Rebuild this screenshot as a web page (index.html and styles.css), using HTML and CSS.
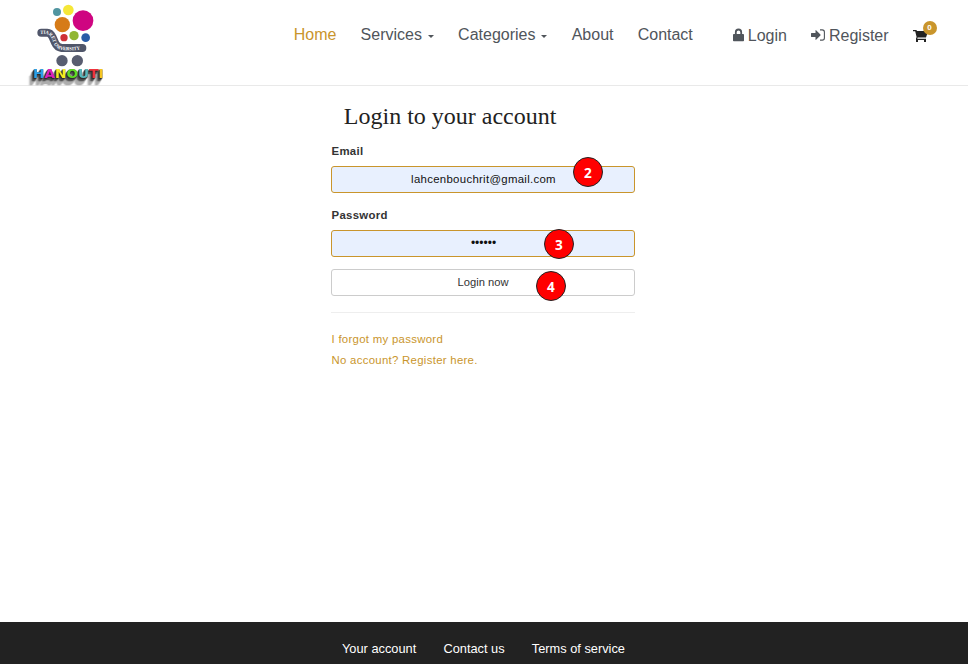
FILE: index.html
```html
<!DOCTYPE html>
<html lang="en">
<head>
<meta charset="utf-8">
<title>Hanouti - Login</title>
<link rel="stylesheet" href="styles.css">
</head>
<body>
<header class="header">
  <a class="logo" href="#">
    <svg width="95" height="86" viewBox="0 0 285 258">
      <defs>
        <path id="cart-curve" d="M61 101 L78 102 Q90 103 96 117 L102 131 Q108 147 125 150 Q155 153 197 147"/>
      </defs>
      <circle cx="111" cy="36" r="12" fill="#5195a0"/>
      <circle cx="145" cy="30" r="16" fill="#f5e738"/>
      <circle cx="127" cy="74" r="23" fill="#d67b18"/>
      <circle cx="189" cy="62" r="31" fill="#cf0581"/>
      <circle cx="132" cy="113" r="11" fill="#cf3036"/>
      <circle cx="162" cy="107" r="14" fill="#91b632"/>
      <circle cx="197" cy="113" r="13" fill="#285ba7"/>
      <path d="M64 98 H82 Q91 98 97 110 L106 130 Q111 142 125 144 H187" fill="none" stroke="#50566a" stroke-width="24" stroke-linecap="round" stroke-linejoin="round"/>
      <text class="logo-ribbon"><textPath href="#cart-curve" textLength="144" lengthAdjust="spacingAndGlyphs">TIARET UNIVERSITY</textPath></text>
      <circle cx="126" cy="182" r="17" fill="#585d70"/>
      <circle cx="172" cy="182" r="17" fill="#585d70"/>
      <text class="logo-word" x="39" y="234" textLength="212" lengthAdjust="spacingAndGlyphs"><tspan fill="#2aa0e8">H</tspan><tspan fill="#dc21bd">A</tspan><tspan fill="#f3ee20">N</tspan><tspan fill="#5fdc24">O</tspan><tspan fill="#58b8bd">U</tspan><tspan fill="#ef333d">T</tspan><tspan fill="#f5c522">I</tspan></text>
    </svg>
  </a>
  <nav class="nav">
    <a class="active" href="#">Home</a>
    <a href="#">Services<i class="caret"></i></a>
    <a href="#">Categories<i class="caret"></i></a>
    <a href="#">About</a>
    <a href="#">Contact</a>
  </nav>
  <div class="user-nav">
    <a href="#"><svg class="lock" width="11" height="14" viewBox="0 0 11 14"><path d="M2.8 6V4.2a2.7 2.7 0 0 1 5.4 0V6" fill="none" stroke="currentColor" stroke-width="1.8"/><rect y="6" width="11" height="7.2" rx=".8" fill="currentColor"/></svg>Login</a>
    <a href="#"><svg class="enter" width="14" height="12" viewBox="0 0 14 12"><path d="M0 4.4Q0 4 .4 4H4.5V1.5Q4.5.8 5.1 1.2L9.4 5.4Q9.9 6 9.4 6.6L5.1 10.8Q4.5 11.2 4.5 10.5V8H.4Q0 8 0 7.6Z" fill="currentColor"/><path d="M9 .9H11.2Q13.4.9 13.4 3.1V8.9Q13.4 11.1 11.2 11.1H9" fill="none" stroke="currentColor" stroke-width="1.1"/></svg>Register</a>
    <a class="cart" href="#"><svg width="16" height="14" viewBox="0 0 16 14"><path d="M0 1H3.4L4 2H15.2L13 8.5H4.6L4.3 9.8H13V13H11V11H5V13H3V9.5L3.6 8L2.2 2.2H0Z" fill="#222"/></svg><span class="badge">0</span></a>
  </div>
</header>
<main class="login">
  <h1>Login to your account</h1>
  <form>
    <label for="email">Email</label>
    <div class="field"><input id="email" type="text" value="lahcenbouchrit@gmail.com"><span class="marker marker-email">2</span></div>
    <label for="password">Password</label>
    <div class="field field-password"><input id="password" type="password" value="secret"><span class="marker marker-password">3</span></div>
    <div class="field"><button type="button">Login now</button><span class="marker marker-submit">4</span></div>
  </form>
  <div class="links">
    <a href="#">I forgot my password</a>
    <a href="#">No account? Register here.</a>
  </div>
</main>
<footer class="footer">
  <a href="#">Your account</a>
  <a href="#">Contact us</a>
  <a href="#">Terms of service</a>
</footer>
</body>
</html>
```
FILE: styles.css
```css
* { box-sizing: border-box; }

body {
  display: flex;
  flex-direction: column;
  height: 664px;
  margin: 0;
  overflow: hidden;
  background: #fff;
  color: #333;
  font-family: "Liberation Sans", Arial, sans-serif;
  font-size: 11.4px;
}

a { color: inherit; text-decoration: none; }

.header {
  display: flex;
  flex: none;
  height: 86px;
  padding-left: 20px;
  border-bottom: 1px solid #e9e9e9;
  color: #50555b;
  font-size: 16px;
  line-height: 20px;
}

.logo { width: 95px; height: 86px; }
.logo svg { display: block; }

.logo-ribbon {
  fill: #fff;
  font: bold 15px "Liberation Serif", serif;
}

.logo-word {
  font: bold 37px "DejaVu Sans", sans-serif;
  filter: drop-shadow(-1px 1.5px 0 #222) drop-shadow(-2px 3px 0 #333) drop-shadow(-4px 6px 0 #555) drop-shadow(-7px 12px 0 #7779);
}

.nav {
  display: flex;
  gap: 24.2px;
  margin-left: 178.7px;
  padding-top: 25px;
}

.nav a,
.user-nav a { display: flex; height: 20px; white-space: nowrap; }

.active { color: #c9952c; }

.caret {
  margin: 10px 0 0 6px;
  width: 6px;
  height: 3px;
  border: solid transparent;
  border-width: 3px 3px 0;
  border-top-color: #50555b;
}

.user-nav {
  display: flex;
  gap: 24px;
  margin-left: 40px;
  padding-top: 26px;
}

.lock { margin: 2px 4px 0 0; }
.enter { margin: 3px 4px 0 0; }

.cart { position: relative; }
.cart svg { margin-top: 3px; }

.badge {
  position: absolute;
  top: -5px;
  left: 10px;
  width: 14px;
  height: 14px;
  border-radius: 50%;
  background: #c9952c;
  color: #fff;
  font-size: 8px;
  font-weight: bold;
  line-height: 14px;
  text-align: center;
}

.login {
  flex: 1;
  width: 304px;
  margin-left: 331px;
}

h1 {
  margin: 16px 0 14px 12.8px;
  color: #222;
  font: 24px/28px "Liberation Serif", "Times New Roman", serif;
}

label {
  display: block;
  height: 22px;
  padding-left: .5px;
  font-weight: bold;
  letter-spacing: .3px;
  line-height: 14px;
}

.field {
  position: relative;
  height: 27px;
  margin-bottom: 15px;
}

.field + label { margin-top: 15px; }
.field:has(#email) { margin-bottom: 0; }
.field-password { margin-bottom: 12px; }

input,
button {
  display: block;
  width: 100%;
  height: 27px;
  margin: 0;
  border: 1px solid #c9952c;
  border-radius: 3px;
  background: #e8f0fe;
  color: #111;
  font: 11.4px "Liberation Sans", Arial, sans-serif;
  letter-spacing: .3px;
  text-align: center;
}

input { padding: 0 1px 2px 2px; }

#password {
  padding-bottom: 1px;
  font-size: 12px;
  letter-spacing: 0;
}

button {
  padding-bottom: 2px;
  border-color: #ccc;
  background: #fff;
  color: #333;
  font-size: 11.2px;
  letter-spacing: 0;
}

.marker {
  position: absolute;
  width: 30px;
  height: 30px;
  border: 1px solid #222;
  border-radius: 50%;
  background: #f00;
  color: #fff;
  font: bold 13.6px/30px "Noto Sans", sans-serif;
  text-align: center;
}

.marker-email { top: -9px; left: 242px; }
.marker-password { top: -1px; left: 213px; }
.marker-submit { top: 2px; left: 205px; }

.links {
  display: flex;
  flex-direction: column;
  margin-top: 16px;
  padding: 16px 0 0 .5px;
  border-top: 1px solid #eee;
  color: #c9952c;
  letter-spacing: .29px;
  line-height: 21px;
}

.footer {
  display: flex;
  flex: none;
  gap: 27.2px;
  height: 42px;
  padding: 18px 0 0 342px;
  background: #222;
  color: #fff;
  font-size: 12.8px;
  line-height: 18px;
}
```
